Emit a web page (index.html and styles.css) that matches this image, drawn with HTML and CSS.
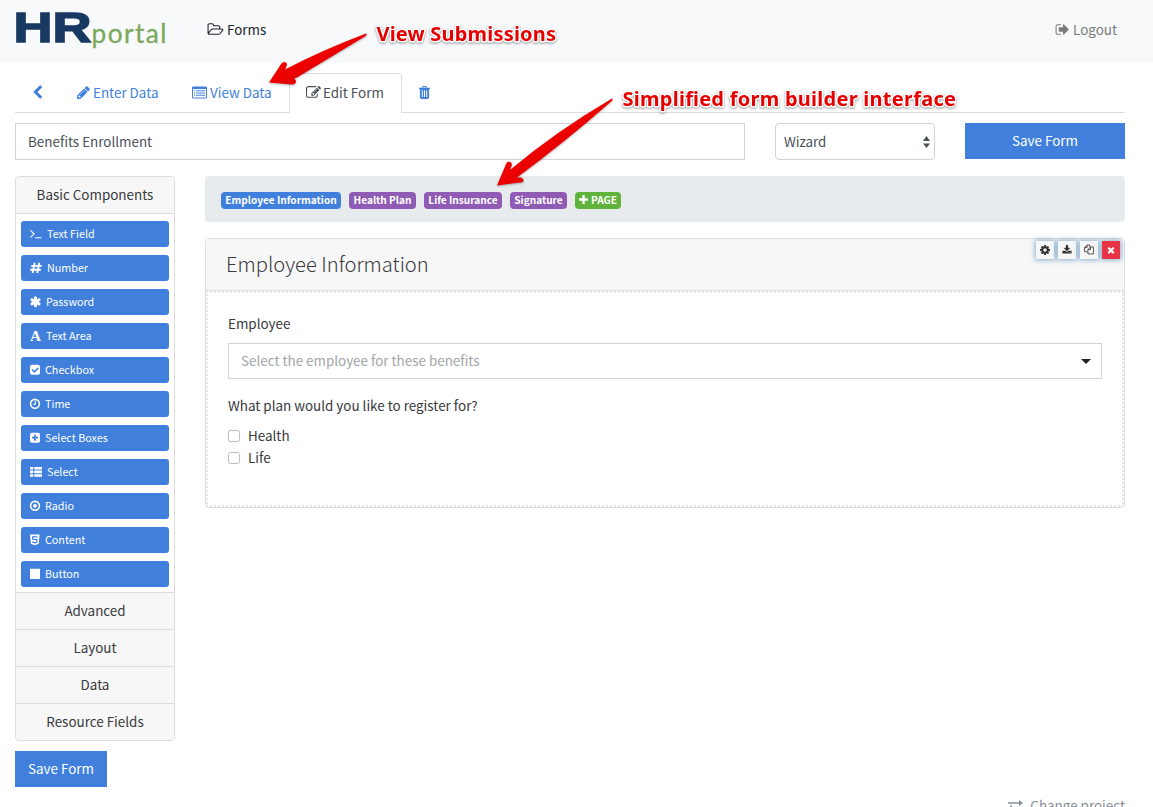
FILE: index.html
```html
<!DOCTYPE html>
<html lang="en">
<head>
<meta charset="utf-8">
<title>HR Portal - Edit Form</title>
<link rel="stylesheet" href="styles.css">
</head>
<body>
<header class="topbar">
  <svg class="logo" width="154" height="44" viewBox="0 0 154 44" role="img" aria-label="HR portal">
    <text class="logo-hr" x="-1.500" y="38" textLength="78" lengthAdjust="spacingAndGlyphs">HR</text>
    <text class="logo-portal" x="76.500" y="38.500" textLength="76.500" lengthAdjust="spacingAndGlyphs">portal</text>
  </svg>
  <a class="nav-forms"><svg class="i" width="17" height="15" viewBox="0 0 2048 1792"><path d="M1845 931q0-35-53-35h-1088q-40 0-85.500 21.500t-71.500 52.500l-294 363q-18 24-18 40 0 35 53 35h1088q40 0 86-22t71-53l294-363q18-22 18-39zm-1141-163h768v-160q0-40-28-68t-68-28h-576q-40 0-68-28t-28-68v-64q0-40-28-68t-68-28h-320q-40 0-68 28t-28 68v853l256-315q44-53 116-87.500t140-34.500zm1269 163q0 62-46 120l-295 363q-43 53-116 87.500t-140 34.500h-1088q-92 0-158-66t-66-158v-960q0-92 66-158t158-66h320q92 0 158 66t66 158v32h544q92 0 158 66t66 158v160h192q54 0 99 24.500t67 70.500q15 32 15 68z"/></svg><span>Forms</span></a>
  <a class="nav-logout"><svg class="i" width="15" height="15" viewBox="0 0 1792 1792"><path d="M704 1440q0 4 1 20t.5 26.500-3 23.500-10 19.500-20.500 6.500h-320q-119 0-203.500-84.500t-84.500-203.500v-704q0-119 84.500-203.500t203.500-84.500h320q13 0 22.500 9.500t9.500 22.500q0 4 1 20t.5 26.500-3 23.500-10 19.500-20.500 6.500h-320q-66 0-113 47t-47 113v704q0 66 47 113t113 47h312l11.500 1 11.500 3 8 5.500 7 9 2 13.500zm928-544q0 26-19 45l-544 544q-19 19-45 19t-45-19-19-45v-288h-448q-26 0-45-19t-19-45v-384q0-26 19-45t45-19h448v-288q0-26 19-45t45-19 45 19l544 544q19 19 19 45z"/></svg><span>Logout</span></a>
</header>

<div class="page">
  <nav class="tabs">
    <a class="tab tab-back"><svg class="i" width="15" height="15" viewBox="0 0 1792 1792"><path d="M1427 301l-531 531 531 531q19 19 19 45t-19 45l-166 166q-19 19-45 19t-45-19l-742-742q-19-19-19-45t19-45l742-742q19-19 45-19t45 19l166 166q19 19 19 45t-19 45z"/></svg></a>
    <a class="tab tab-enter"><svg class="i" width="15" height="15" viewBox="0 0 1792 1792"><path d="M491 1536l91-91-235-235-91 91v107h128v128h107zm523-928q0-22-22-22-10 0-17 7l-542 542q-7 7-7 17 0 22 22 22 10 0 17-7l542-542q7-7 7-17zm-54-192l416 416-832 832h-416v-416zm683 96q0 53-37 90l-166 166-416-416 166-165q36-38 90-38 53 0 91 38l235 234q37 39 37 91z"/></svg><span>Enter Data</span></a>
    <a class="tab tab-view"><svg class="i" width="15" height="13" viewBox="0 0 15 13"><path fill-rule="evenodd" d="M1.300 .5h12.400a1.300 1.300 0 0 1 1.300 1.300v9.400a1.300 1.300 0 0 1-1.300 1.300H1.300A1.300 1.300 0 0 1 0 11.200V1.800A1.300 1.300 0 0 1 1.300 .5zM1 3v8.200q0 .3.300.3h12.400q.3 0 .3-.3V3z"/><path d="M2 4.200h1.200v1H2zM4 4.200h9v1H4zM2 6.500h1.200v1H2zM4 6.500h9v1H4zM2 8.800h1.200v1H2zM4 8.800h9v1H4z"/></svg><span>View Data</span></a>
    <a class="tab tab-active"><svg class="i" width="15" height="15" viewBox="0 0 1792 1792"><path d="M888 1184l116-116-152-152-116 116v56h96v96h56zm440-720q-16-16-33 1l-350 350q-17 17-1 33t33-1l350-350q17-17 1-33zm80 594v190q0 119-84.500 203.500t-203.500 84.500h-832q-119 0-203.500-84.500t-84.500-203.500v-832q0-119 84.500-203.500t203.500-84.500h832q63 0 117 25 15 7 18 23 3 17-9 29l-49 49q-14 14-32 8-23-6-45-6h-832q-66 0-113 47t-47 113v832q0 66 47 113t113 47h832q66 0 113-47t47-113v-126q0-13 9-22l64-64q15-15 35-7t20 29zm-96-738l288 288-672 672h-288v-288zm444 132l-92 92-288-288 92-92q28-28 68-28t68 28l152 152q28 28 28 68t-28 68z"/></svg><span>Edit Form</span></a>
    <a class="tab tab-trash"><svg class="i" width="11" height="13" viewBox="0 0 11 13"><path fill-rule="evenodd" d="M3.200 1.800V1q0-1 1-1h2.600q1 0 1 1v.8H11V3h-.9v8.300q0 1.700-1.500 1.700H2.400Q.9 13 .9 11.300V3H0V1.800zM4.200 1.800h2.600V1H4.200zM2.800 4.300v6.800h1V4.300zM5 4.300v6.800h1V4.300zM7.200 4.300v6.800h1V4.300z"/></svg></a>
  </nav>

  <div class="form-row">
    <div class="field name-field"><span>Benefits Enrollment</span></div>
    <div class="field display-field"><span>Wizard</span><svg width="7" height="12" viewBox="0 0 7 12"><path d="M3.500 0L7 5H0zM0 7.500h7L3.500 12z"/></svg></div>
    <button class="btn btn-wide">Save Form</button>
  </div>

  <div class="builder">
    <aside class="side">
      <div class="side-group">
        <div class="side-title">Basic Components</div>
        <div class="side-list">
          <div class="comp"><svg class="i" width="12" height="12" viewBox="0 0 12 12"><path class="ln" d="M.5 2.300L4 5.800.5 9.300M5 9.800h6.500"/></svg><span>Text Field</span></div>
          <div class="comp"><svg class="i" width="12" height="12" viewBox="0 0 12 12"><path class="ln bold" d="M4.700 .8L2.600 11M9.300 .8L7.200 11M1.200 3.900h10.600M.2 7.800h10.600"/></svg><span>Number</span></div>
          <div class="comp"><svg class="i" width="11" height="12" viewBox="0 0 11 12"><path class="ln fat" d="M5.500 1.800v8M1.900 3.700l7.200 4.200M9.100 3.700L1.900 7.900"/></svg><span>Password</span></div>
          <div class="comp"><svg class="i" width="11" height="12" viewBox="0 0 11 12"><text class="glyph" x="0" y="10.500" textLength="11" lengthAdjust="spacingAndGlyphs">A</text></svg><span>Text Area</span></div>
          <div class="comp"><svg class="i" width="10" height="12" viewBox="0 0 10 12"><rect y=".7" width="10" height="10" rx="2"/><path class="cut" d="M2 5.500l2.300 2.300L8.200 4"/></svg><span>Checkbox</span></div>
          <div class="comp"><svg class="i" width="10" height="12" viewBox="0 0 10 12"><circle class="ln mid-ln" cx="5" cy="5.800" r="4.400"/><path class="ln" d="M5.300 3v3.200H3.200"/></svg><span>Time</span></div>
          <div class="comp"><svg class="i" width="10" height="12" viewBox="0 0 10 12"><rect y=".7" width="10" height="10" rx="2"/><path class="cut" d="M5 2.700v6M2 5.700h6"/></svg><span>Select Boxes</span></div>
          <div class="comp"><svg class="i" width="12" height="12" viewBox="0 0 12 12"><path d="M0 1h3.300v2.600H0zM4.300 1H12v2.600H4.300zM0 4.600h3.300v2.600H0zM4.300 4.600H12v2.600H4.300zM0 8.200h3.300v2.600H0zM4.300 8.200H12v2.600H4.300z"/></svg><span>Select</span></div>
          <div class="comp"><svg class="i" width="10" height="12" viewBox="0 0 10 12"><circle class="ln mid-ln" cx="5" cy="5.800" r="4.400"/><circle cx="5" cy="5.800" r="1.900"/></svg><span>Radio</span></div>
          <div class="comp"><svg class="i" width="10" height="12" viewBox="0 0 10 12"><path d="M0 .5h9.600l-.9 9.300-3.900 1.400-3.900-1.400z"/><path class="cut thin" d="M7.400 2.800H2.600l.2 2.700h4.100L6.600 8.300l-1.800.6-1.900-.6-.1-1"/></svg><span>Content</span></div>
          <div class="comp"><svg class="i" width="10" height="12" viewBox="0 0 10 12"><rect y=".7" width="10" height="10.300" rx=".6"/></svg><span>Button</span></div>
        </div>
      </div>
      <div class="side-title">Advanced</div>
      <div class="side-title">Layout</div>
      <div class="side-title">Data</div>
      <div class="side-title">Resource Fields</div>
    </aside>

    <main class="main">
      <div class="crumbs">
        <span class="badge b1">Employee Information</span>
        <span class="badge b2">Health Plan</span>
        <span class="badge b3">Life Insurance</span>
        <span class="badge b4">Signature</span>
        <span class="badge b5"><svg width="9" height="9" viewBox="0 0 9 9"><path d="M3.300 0h2.400v3.300H9v2.400H5.700V9H3.300V5.700H0V3.300h3.300z"/></svg><span>PAGE</span></span>
      </div>
      <section class="card">
        <div class="tools">
          <span class="tool"><svg width="10" height="10" viewBox="128 128 1536 1536"><path d="M1152 896q0-106-75-181t-181-75-181 75-75 181 75 181 181 75 181-75 75-181zm512-109v222q0 12-8 23t-20 13l-185 28q-19 54-39 91 35 50 107 138 10 12 10 25t-9 23q-27 37-99 108t-94 71q-12 0-26-9l-138-108q-44 23-91 38-16 136-29 186-7 28-36 28h-222q-14 0-24.500-8.500t-11.500-21.500l-28-184q-49-16-90-37l-141 107q-10 9-25 9-14 0-25-11-126-114-165-168-7-10-7-23 0-12 8-23 15-21 51-66.500t54-70.500q-27-50-41-99l-183-27q-13-2-21-12.500t-8-23.500v-222q0-12 8-23t19-13l186-28q14-46 39-92-40-57-107-138-10-12-10-24 0-10 9-23 26-36 98.500-107.500t94.500-71.500q13 0 26 10l138 107q44-23 91-38 16-136 29-186 7-28 36-28h222q14 0 24.500 8.500t11.500 21.500l28 184q49 16 90 37l142-107q9-9 24-9 13 0 25 10 129 119 165 170 7 8 7 22 0 12-8 23-15 21-51 66.500t-54 70.500q26 50 41 98l183 28q13 2 21 12.500t8 23.500z"/></svg></span>
          <span class="tool"><svg width="10" height="10" viewBox="0 0 1792 1792"><path d="M1344 1344q0-26-19-45t-45-19-45 19-19 45 19 45 45 19 45-19 19-45zm256 0q0-26-19-45t-45-19-45 19-19 45 19 45 45 19 45-19 19-45zm128-224v320q0 40-28 68t-68 28h-1472q-40 0-68-28t-28-68v-320q0-40 28-68t68-28h465l135 136q58 56 136 56t136-56l136-136h464q40 0 68 28t28 68zm-325-569q17 41-14 70l-448 448q-18 19-45 19t-45-19l-448-448q-31-29-14-70 17-39 59-39h256v-448q0-26 19-45t45-19h256q26 0 45 19t19 45v448h256q42 0 59 39z"/></svg></span>
          <span class="tool"><svg width="10" height="11" viewBox="0 0 11 11"><path class="outline" d="M4.400 8H.6V3.400L3.400.6h3v2.100M3.400.6v2.800H.6M4.400 10.400V5.500l2.800-2.800h3.200v7.700zM7.200 2.700v2.800H4.400"/></svg></span>
          <span class="tool tool-remove"><svg width="10" height="10" viewBox="0 0 1792 1792"><path d="M1490 1322q0 40-28 68l-136 136q-28 28-68 28t-68-28l-294-294-294 294q-28 28-68 28t-68-28l-136-136q-28-28-28-68t28-68l294-294-294-294q-28-28-28-68t28-68l136-136q28-28 68-28t68 28l294 294 294-294q28-28 68-28t68 28l136 136q28 28 28 68t-28 68l-294 294 294 294q28 28 28 68z"/></svg></span>
        </div>
        <h3 class="card-title">Employee Information</h3>
        <div class="card-body">
          <label class="lbl">Employee</label>
          <div class="field select-field"><span>Select the employee for these benefits</span><svg width="10" height="5" viewBox="0 0 10 5"><path d="M0 0h10L5 5z"/></svg></div>
          <label class="lbl plan">What plan would you like to register for?</label>
          <label class="check"><i class="box"></i><span>Health</span></label>
          <label class="check"><i class="box"></i><span>Life</span></label>
        </div>
      </section>
    </main>
  </div>
  <button class="btn btn-save">Save Form</button>
  <footer class="foot"><svg width="15" height="11" viewBox="0 0 15 11"><path d="M0 2.200h11V0l4 3-4 3V3.800H0zM15 8.800H4V11L0 8l4-3v2.200h11z"/></svg><span>Change project</span></footer>
</div>

<svg class="notes" width="1153" height="220" viewBox="0 0 1153 220">
  <defs><linearGradient id="red" x1="0" y1="0" x2="1" y2="1"><stop offset="0" stop-color="#f00"/><stop offset=".45" stop-color="#f00000"/><stop offset="1" stop-color="#c00000"/></linearGradient></defs>
  <path class="arrow" d="M366 33.500Q368 35 364 37L297 77.500 294 78.500Q297 80 295.500 83 294 84.500 292 84.500L269 82.500 281.500 63.500Q283.500 61 286 62.500 287.500 64 286.500 66L285 69.500Q320 51 366 33.500z"/>
  <path class="arrow" d="M612 98.500Q614 99.500 610 102.500Q565 142 517 177.500L521 177.500Q524 178.500 523.500 181 522.500 183 520 182.500L497 185.500 506.500 163Q508 161 510.500 162 512.500 164 511.500 166L510 170Q555 132 612 98.500z"/>
  <text class="note" x="376.500" y="41" textLength="179.500">View Submissions</text>
  <text class="note" x="622.500" y="105.500" textLength="333.500">Simplified form builder interface</text>
</svg>
</body>
</html>
```
FILE: styles.css
```css
* { box-sizing: border-box; }
body {
  margin: 0;
  height: 807px;
  overflow: hidden;
  position: relative;
  background: #fff;
  color: #373a3c;
  font: 13.430px/22px "Noto Sans CJK SC", "Open Sans", sans-serif;
}
svg { display: block; flex: none; fill: currentColor; }

.topbar {
  height: 63px;
  padding: 0 36px 0 15px;
  display: flex;
  align-items: center;
  background: #f8f9fb;
}
.logo { margin-top: -11px; overflow: visible; }
.logo-hr { font: bold 43px "Liberation Sans", sans-serif; fill: #183961; stroke: #183961; stroke-width: 1.500; }
.logo-portal { font: 400 27px Lato, sans-serif; fill: #7ba95c; stroke: #7ba95c; stroke-width: .3; letter-spacing: 1.500px; }
.nav-forms, .nav-logout { display: flex; align-items: center; gap: 3px; margin-top: -4px; }
.nav-forms { margin-left: 38px; color: #212529; }
.nav-logout { margin-left: auto; color: #7b7b7b; }
.topbar span, .field span, .check span { margin-top: -2px; }
.tab span { margin-top: -3px; }
.comp span { margin-top: -1px; }

.page { padding: 10px 28px 0 15px; }
.tabs { display: flex; height: 40px; border-bottom: 1px solid #dadee3; }
.tab { display: flex; align-items: center; gap: 2px; height: 40px; color: #4080dc; border: 1px solid transparent; border-bottom: 0; }
.tab .i { margin-top: -2px; }
.tab-back { width: 45px; padding-left: 14px; }
.tab-enter { width: 117px; padding-left: 15px; }
.tab-view { width: 112px; padding-left: 14px; gap: 3px; }
.tab-active { width: 113px; padding-left: 16px; color: #495057; background: #fff; border-color: #dadee3; border-radius: 4px 4px 0 0; }
.tab-trash { padding-left: 16px; }

.form-row { display: flex; gap: 30px; margin-top: 10px; }
.field { height: 37px; display: flex; align-items: center; border: 1px solid #ced4da; background: #fff; padding: 0 12px; color: #495057; }
.name-field { flex: 1; }
.display-field { width: 160px; padding: 0 4px 0 8px; border-radius: 4px; justify-content: space-between; }
.btn { height: 36px; padding: 0 0 2px; border: 0; background: #4080dc; color: #fff; font: inherit; }
.btn-wide { width: 160px; }

.builder { display: flex; gap: 30px; align-items: flex-start; margin-top: 16px; }
.side { width: 160px; border: 1px solid #dcdddf; border-radius: 4px; overflow: hidden; }
.side-title { height: 37px; line-height: 34px; text-align: center; background: #f7f7f7; border-top: 1px solid #dcdddf; }
.side-group .side-title { border-top: 0; border-bottom: 1px solid #dcdddf; }
.side-list { display: grid; gap: 8px; padding: 7px 5px 5px; }
.comp { height: 26px; display: flex; align-items: center; gap: 5px; padding-left: 9px; border-radius: 3px; background: #4080dc; color: #fff; font-size: 10.750px; }
.comp .i { overflow: visible; }
.ln { fill: none; stroke: currentColor; stroke-width: 1.100; }
.mid-ln { stroke-width: 1.600; }
.bold { stroke-width: 1.900; }
.fat { stroke-width: 3; stroke-linecap: round; }
.cut { fill: none; stroke: #4080dc; stroke-width: 1.700; }
.thin { stroke-width: 1.200; }
.glyph { font: bold 14px "Liberation Serif", serif; }

.main { flex: 1; }
.crumbs { height: 46px; padding: 16px; display: flex; gap: 8px; align-items: flex-start; border-radius: 4px; background: #e8ebee; }
.badge { height: 17px; padding-bottom: 2px; line-height: 15px; display: flex; align-items: center; justify-content: center; border-radius: 4px; background: #8f5bb5; color: #fff; font-size: 10.100px; font-weight: 700; white-space: nowrap; }
.b1 { width: 120px; background: #4080dc; }
.b2 { width: 67px; }
.b3 { width: 78px; }
.b4 { width: 57px; }
.b5 { width: 46px; gap: 3px; background: #5fb33b; }

.card { position: relative; margin-top: 16px; height: 270px; border: 1px solid #dcdfe2; border-radius: 4px; display: flex; flex-direction: column; }
.card-title { margin: 0; height: 52px; padding-left: 20px; line-height: 49px; font-size: 20.150px; font-weight: 300; background: #f7f7f7; border-bottom: 1px solid #dcdfe2; }
.card-body { flex: 1; border: 2px dotted #e6e6e6; padding: 19px 20px 0; }
.lbl { display: block; }
.select-field { height: 36px; margin-top: 9px; padding-right: 10px; justify-content: space-between; color: #a2a5a9; }
.select-field svg { color: #222; }
.plan { margin-top: 15px; margin-bottom: 9px; }
.check { height: 22px; display: flex; align-items: center; gap: 8px; }
.box { width: 12px; height: 12px; border: 1px solid #bcbcbc; border-radius: 2.500px; background: #fff; }
.tools { position: absolute; top: 2px; right: 4px; display: flex; gap: 4px; }
.tool { width: 18px; height: 18px; padding-bottom: 1px; display: flex; align-items: center; justify-content: center; background: #f7f7f7; color: #333; box-shadow: 0 0 5px 1px rgba(48, 113, 169, .55); }
.tool-remove { background: #e93445; color: #fff; }
.outline { fill: none; stroke: currentColor; stroke-width: .9; }

.btn-save { display: block; width: 92px; margin-top: 10px; }
.foot { display: flex; align-items: center; justify-content: flex-end; gap: 7px; margin-top: 7px; color: #868e96; }

.notes { position: absolute; left: 0; top: 0; pointer-events: none; }
.arrow { fill: url(#red); filter: drop-shadow(0 1px 1px rgba(0, 0, 0, .3)); }
.note { font: bold 20px "Noto Sans", "Open Sans", sans-serif; fill: #e60000; stroke: #fff; stroke-width: 3px; stroke-linejoin: round; paint-order: stroke; filter: drop-shadow(0 1px 1px rgba(0, 0, 0, .4)); }
```
